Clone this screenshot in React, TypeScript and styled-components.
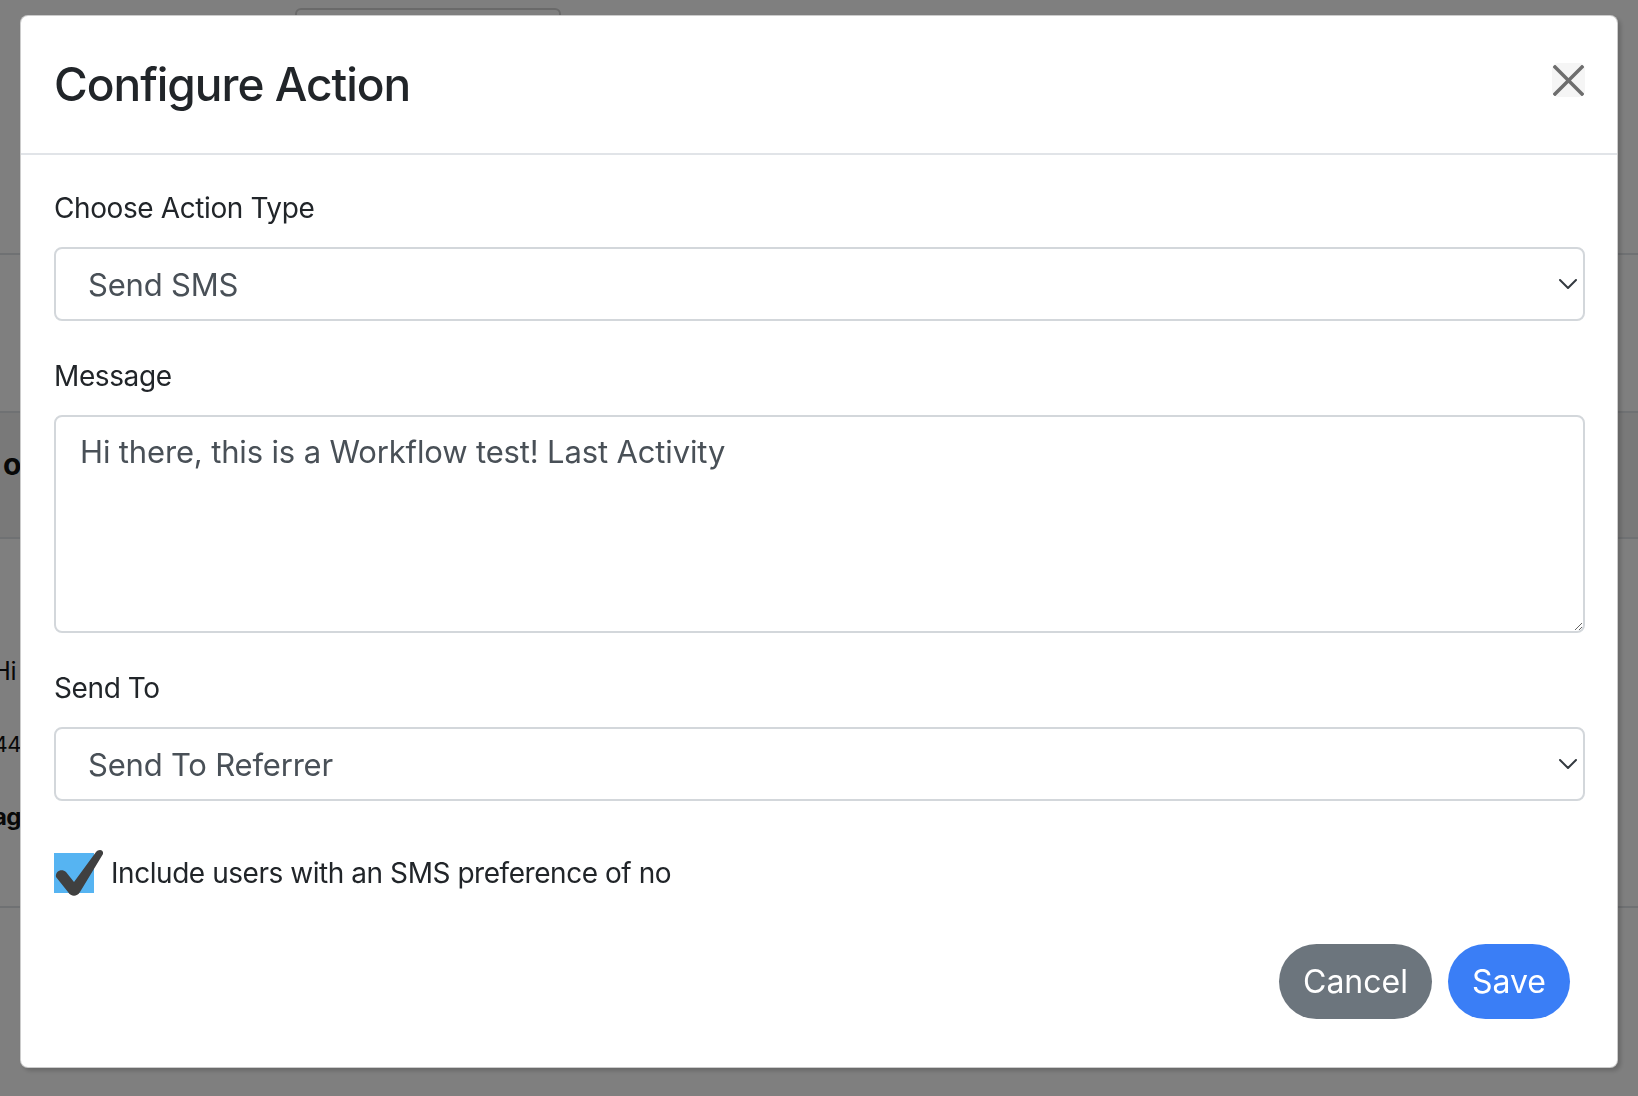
import styled, { createGlobalStyle } from 'styled-components';

const GlobalStyle = createGlobalStyle`
  * { box-sizing: border-box; }
  html, body {
    margin: 0;
    height: 100%;
    overflow: hidden;
    background: #fff;
  }
  body {
    font-family: Inter, "Noto Sans", "Liberation Sans", sans-serif;
    color: #212529;
  }
`;

/* page behind the backdrop */
const Page = styled.div`
  width: 100%;
  height: 1096px;
  display: flex;
  flex-direction: column;
  background: #fff;
`;

const TopArea = styled.div`
  height: 255px;
  padding: 8px 0 0 295px;
  border-bottom: 2px solid #dfe2e6;
`;

const TabBox = styled.div`
  width: 266px;
  height: 64px;
  border: 2px solid #d4d4d4;
  border-radius: 6px;
`;

const Spacer = styled.div<{ $h: number }>`
  height: ${(p) => p.$h}px;
`;

const HeadBand = styled.div`
  height: 128px;
  padding-top: 31px;
  background: #f3f3f3;
  border-top: 2px solid #dfe2e6;
  border-bottom: 2px solid #dfe2e6;
`;

const Rows = styled.div`
  height: 369px;
  padding-top: 95px;
  border-bottom: 2px solid #dfe2e6;
`;

const Row = styled.div`
  height: 73px;
  display: flex;
  align-items: center;
`;

const Gutter = styled.div<{ $bold?: boolean; $pad?: number; $size?: number }>`
  width: 21px;
  display: flex;
  justify-content: flex-end;
  overflow: hidden;
  white-space: nowrap;
  padding-right: ${(p) => p.$pad ?? 0}px;
  font-size: ${(p) => p.$size ?? (p.$bold ? 30 : 25)}px;
  line-height: 40px;
  letter-spacing: -0.5px;
  font-weight: ${(p) => (p.$bold ? 700 : 400)};
  color: #111;
`;

/* modal */
const Overlay = styled.div`
  position: fixed;
  inset: 0;
  background: rgba(0, 0, 0, 0.5);
  padding: 15px 0 0 20px;
`;

const Modal = styled.div`
  width: 1598px;
  background: #fff;
  border: 1px solid rgba(0, 0, 0, 0.2);
  border-radius: 8px;
  box-shadow: 3px 3px 4px rgba(0, 0, 0, 0.18);
`;

const Header = styled.div`
  display: flex;
  align-items: center;
  justify-content: space-between;
  padding: 39px 32px 40px 33px;
  border-bottom: 2px solid #e1e4e8;
`;

const Title = styled.h3`
  margin: 0;
  font-size: 46px;
  font-weight: 500;
  letter-spacing: -1px;
  line-height: 58px;
  color: #212529;
`;

const CloseButton = styled.button`
  width: 33px;
  height: 34px;
  margin-top: -8px;
  padding: 0;
  border: none;
  border-radius: 6px;
  background: #f5f5f5;
  display: flex;
  align-items: center;
  justify-content: center;
  cursor: pointer;
`;

const Body = styled.div`
  padding: 32px 32px 0 33px;
`;

const Group = styled.div<{ $mb?: number }>`
  margin-bottom: ${(p) => p.$mb ?? 34}px;
`;

const Label = styled.label`
  display: block;
  font-size: 28px;
  letter-spacing: -0.4px;
  line-height: 42px;
  margin-bottom: 18px;
  color: #212529;
`;

const SelectWrap = styled.div`
  position: relative;
`;

const Select = styled.select`
  width: 100%;
  height: 74px;
  appearance: none;
  border: 2px solid #d3d7db;
  border-radius: 8px;
  background: #fff;
  padding: 0 60px 0 32px;
  font-family: inherit;
  font-size: 31px;
  letter-spacing: -0.2px;
  color: #495057;
  outline: none;
`;

const Chevron = styled.svg`
  position: absolute;
  right: 8px;
  top: 50%;
  transform: translateY(-50%);
  pointer-events: none;
`;

const TextArea = styled.textarea`
  display: block;
  width: 100%;
  height: 218px;
  border: 2px solid #d3d7db;
  border-radius: 8px;
  padding: 12px 24px;
  font-family: inherit;
  font-size: 31px;
  letter-spacing: -0.15px;
  line-height: 1.5;
  color: #495057;
  resize: vertical;
  outline: none;
`;

const CheckRow = styled.label`
  display: flex;
  align-items: center;
  gap: 7px;
  height: 48px;
  margin-top: 48px;
  font-size: 28px;
  letter-spacing: -0.45px;
  color: #212529;
`;

const Footer = styled.div`
  display: flex;
  justify-content: flex-end;
  gap: 16px;
  padding: 47px 47px 48px;
`;

const Button = styled.button<{ $bg: string }>`
  height: 75px;
  padding: 0 24px;
  border: none;
  border-radius: 38px;
  background: ${(p) => p.$bg};
  color: #fff;
  font-family: inherit;
  font-size: 32px;
  cursor: pointer;
`;

function ChevronIcon() {
  return (
    <Chevron width="18" height="10" viewBox="0 0 18 10">
      <path d="M1 1l8 8 8-8" fill="none" stroke="#343a40" strokeWidth="2" strokeLinecap="round" strokeLinejoin="round" />
    </Chevron>
  );
}

function CheckIcon() {
  return (
    <svg width="50" height="48" viewBox="0 0 50 48">
      <rect x="0" y="4" width="40" height="40" fill="#56b4f2" />
      <path
        d="M2 28 C1 22 8 19 12 23 L20 33 L42 3 C44 0 50 0 49 5 L26 43 C23 48 17 48 14 43 Z"
        fill="#404040"
      />
    </svg>
  );
}

export default function App() {
  return (
    <>
      <GlobalStyle />
      <Page>
        <TopArea>
          <TabBox />
        </TopArea>
        <Spacer $h={156} />
        <HeadBand>
          <Gutter $bold>o</Gutter>
        </HeadBand>
        <Rows>
          <Row>
            <Gutter $pad={5}>Hi</Gutter>
          </Row>
          <Row>
            <Gutter $size={22}>44</Gutter>
          </Row>
          <Row>
            <Gutter $bold $size={24}>ag</Gutter>
          </Row>
        </Rows>
      </Page>

      <Overlay>
        <Modal>
          <Header>
            <Title>Configure Action</Title>
            <CloseButton aria-label="Close">
              <svg width="31" height="31" viewBox="0 0 31 31">
                <path d="M2 2l27 27M29 2L2 29" stroke="#6e6e6e" strokeWidth="3.5" strokeLinecap="square" />
              </svg>
            </CloseButton>
          </Header>

          <Body>
            <Group>
              <Label>Choose Action Type</Label>
              <SelectWrap>
                <Select defaultValue="sms">
                  <option value="sms">Send SMS</option>
                  <option value="email">Send Email</option>
                </Select>
                <ChevronIcon />
              </SelectWrap>
            </Group>

            <Group>
              <Label>Message</Label>
              <TextArea defaultValue="Hi there, this is a Workflow test! Last Activity" />
            </Group>

            <Group $mb={0}>
              <Label>Send To</Label>
              <SelectWrap>
                <Select defaultValue="referrer">
                  <option value="referrer">Send To Referrer</option>
                  <option value="patient">Send To Patient</option>
                </Select>
                <ChevronIcon />
              </SelectWrap>
            </Group>

            <CheckRow>
              <CheckIcon />
              Include users with an SMS preference of no
            </CheckRow>
          </Body>

          <Footer>
            <Button $bg="#6c757d">Cancel</Button>
            <Button $bg="#3a7ef6">Save</Button>
          </Footer>
        </Modal>
      </Overlay>
    </>
  );
}
